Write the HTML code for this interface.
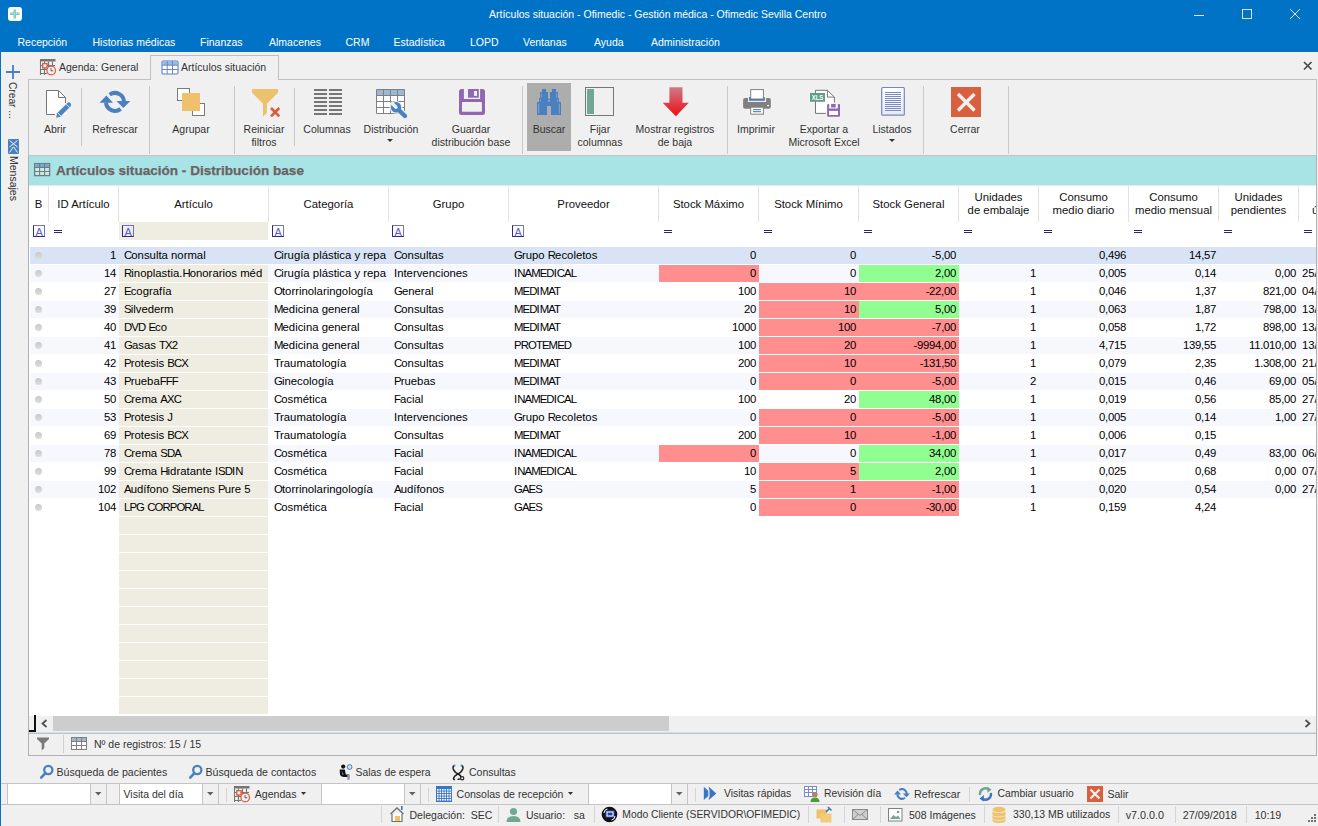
<!DOCTYPE html>
<html><head><meta charset="utf-8">
<style>
*{margin:0;padding:0;box-sizing:border-box}
html,body{width:1318px;height:826px;overflow:hidden;background:#f0f0f0;font-family:"Liberation Sans",sans-serif;color:#222}
.a{position:absolute}
.ui{font-size:10.5px;white-space:nowrap;line-height:12px}
.w{color:#fff}
#title{left:0;top:0;width:1318px;height:52px;background:#0173c6}
.menu{top:36px;color:#fff;font-size:10.5px;line-height:12px;white-space:nowrap}
.sep{width:1px;background:#c8c8c8}
.rl{font-size:10.5px;line-height:13px;text-align:center;white-space:nowrap;color:#333}
.g{font-size:11.35px;line-height:13px;white-space:nowrap;color:#000}
.hd{font-size:11.35px;line-height:13px;white-space:nowrap;text-align:center;color:#111}
.vs{width:1px;background:#e2e2e2;top:186px;height:36px}
.fA{width:12px;height:12px;border:1px solid #7272c4;border-left-color:#2e2e88;border-bottom-color:#2e2e88;top:225px}
.fA:after{content:"A";position:absolute;left:1.5px;top:-0.5px;font-size:11px;color:#5a5ad2;font-family:"Liberation Sans",sans-serif}
.eq{top:230px;width:8px;height:3px;border-top:1px solid #2a2a6a;border-bottom:1px solid #2a2a6a}
.bul{width:7px;height:7px;border-radius:50%;background:linear-gradient(#c8c8c8,#dedede)}
</style></head><body>
<!-- title bar -->
<div id="title" class="a"></div>
<div class="a" style="left:0;top:52px;width:1px;height:774px;background:#0173c6"></div>
<svg class="a" style="left:8px;top:7px" width="14" height="14" viewBox="0 0 14 14"><rect width="14" height="14" rx="3" fill="#fff"/><path d="M5.5 2.5H8V5.5H11.5V8H8V11.5H5.5V8H2V5.5H5.5Z" fill="#7cc8c0"/><path d="M6.7 2.5V11.5M2 6.7H11.5" stroke="#fff" stroke-width="0.5" stroke-dasharray="1 1"/></svg>
<div class="a w ui" style="left:489px;top:8px">Artículos situación - Ofimedic - Gestión médica - Ofimedic Sevilla Centro</div>
<div class="a" style="left:1194px;top:15px;width:10px;height:1px;background:#e6e0d8"></div>
<div class="a" style="left:1242px;top:9px;width:10px;height:10px;border:1px solid #e6e0d8"></div>
<svg class="a" style="left:1289px;top:8px" width="12" height="12"><path d="M1 1L11 11M11 1L1 11" stroke="#e6e0d8" stroke-width="1"/></svg>
<div class="a menu" style="left:17.5px">Recepción</div>
<div class="a menu" style="left:92.5px">Historias médicas</div>
<div class="a menu" style="left:200px">Finanzas</div>
<div class="a menu" style="left:269px">Almacenes</div>
<div class="a menu" style="left:345.5px">CRM</div>
<div class="a menu" style="left:393.5px">Estadística</div>
<div class="a menu" style="left:470px">LOPD</div>
<div class="a menu" style="left:523px">Ventanas</div>
<div class="a menu" style="left:594px">Ayuda</div>
<div class="a menu" style="left:651px">Administración</div>

<!-- tabs -->
<div class="a ui" style="left:59px;top:61px;color:#333">Agenda: General</div>
<div class="a" style="left:150px;top:55px;width:129px;height:25px;border:1px solid #c0c0c0;border-bottom:none;background:#f0f0f0"></div>
<div class="a ui" style="left:181px;top:61px;color:#333">Artículos situación</div>
<svg class="a" style="left:1302px;top:60px" width="11" height="11"><path d="M2 2L9.5 9.5M9.5 2L2 9.5" stroke="#4a4a4a" stroke-width="1.7"/></svg>

<!-- ribbon box -->
<div class="a" style="left:28px;top:79px;width:122px;height:1px;background:#c0c0c0"></div>
<div class="a" style="left:279px;top:79px;width:1038px;height:1px;background:#c0c0c0"></div>
<div class="a" style="left:28px;top:79px;width:1px;height:77px;background:#c0c0c0"></div>
<div class="a" style="left:1316px;top:79px;width:1px;height:77px;background:#c0c0c0"></div>

<!-- separators -->
<div class="a sep" style="left:81px;top:88px;height:58px"></div>
<div class="a sep" style="left:149px;top:86px;height:68px"></div>
<div class="a sep" style="left:234px;top:86px;height:68px"></div>
<div class="a sep" style="left:294px;top:88px;height:58px"></div>
<div class="a sep" style="left:522px;top:86px;height:68px"></div>
<div class="a sep" style="left:727px;top:86px;height:68px"></div>
<div class="a sep" style="left:923px;top:86px;height:68px"></div>
<div class="a sep" style="left:1008px;top:86px;height:68px"></div>
<!-- Buscar highlight -->
<div class="a" style="left:527px;top:83px;width:44px;height:68px;background:#adadad"></div>
<!-- labels -->
<div class="a rl" style="left:15px;width:80px;top:123px">Abrir</div>
<div class="a rl" style="left:75px;width:80px;top:123px">Refrescar</div>
<div class="a rl" style="left:151px;width:80px;top:123px">Agrupar</div>
<div class="a rl" style="left:224px;width:80px;top:123px">Reiniciar<br>filtros</div>
<div class="a rl" style="left:287px;width:80px;top:123px">Columnas</div>
<div class="a rl" style="left:351px;width:80px;top:123px">Distribución</div>
<svg class="a" style="left:387px;top:139px" width="7" height="4"><path d="M0 0H6L3 3Z" fill="#333"/></svg>
<div class="a rl" style="left:421px;width:100px;top:123px">Guardar<br>distribución base</div>
<div class="a rl" style="left:509px;width:80px;top:123px">Buscar</div>
<div class="a rl" style="left:560px;width:80px;top:123px">Fijar<br>columnas</div>
<div class="a rl" style="left:625px;width:100px;top:123px">Mostrar registros<br>de baja</div>
<div class="a rl" style="left:716px;width:80px;top:123px">Imprimir</div>
<div class="a rl" style="left:774px;width:100px;top:123px">Exportar a<br>Microsoft Excel</div>
<div class="a rl" style="left:852px;width:80px;top:123px">Listados</div>
<svg class="a" style="left:889px;top:139px" width="7" height="4"><path d="M0 0H6L3 3Z" fill="#333"/></svg>
<div class="a rl" style="left:925px;width:80px;top:123px">Cerrar</div>

<!-- Abrir icon -->
<svg class="a" style="left:44px;top:88px" width="30" height="32" viewBox="44 88 30 32">
<path d="M46.5 90.5H58.5L65.5 97.5V114.5H46.5Z" fill="#fff"/>
<path d="M55 114.5H46.5V90.5H58.5L65.5 97.5V103" fill="none" stroke="#767676" stroke-width="1"/>
<path d="M58.5 90.5V97.5H65.5" fill="none" stroke="#767676" stroke-width="1"/>
<path d="M56.2 117.8L57 113.3L67.4 102.9Q68.8 101.6 70.4 103.2Q71.8 104.7 70.6 106.2L60.3 116.8Z" fill="#4f83bf"/>
<path d="M57.6 112.8L60.8 116" stroke="#fff" stroke-width="0.8"/>
<path d="M66.3 104.2L69.6 107.5" stroke="#fff" stroke-width="0.8"/>
</svg>
<!-- Refrescar icon -->
<svg class="a" style="left:96px;top:86px" width="40" height="32" viewBox="0 0 40 32">
<path d="M13.7 8.7A9 9 0 0 1 28 16" fill="none" stroke="#4a7fc0" stroke-width="4"/>
<path d="M20.5 15.1H34.3L27.4 22.1Z" fill="#4a7fc0"/>
<path d="M24.6 22.9A9 9 0 0 1 10 16.5" fill="none" stroke="#4a7fc0" stroke-width="4"/>
<path d="M3.5 16.7H17L10.4 9.5Z" fill="#4a7fc0"/>
</svg>
<!-- Agrupar icon -->
<svg class="a" style="left:176px;top:87px" width="32" height="32" viewBox="176 87 32 32">
<rect x="177.5" y="88.5" width="12" height="12" fill="#fff" stroke="#7a7a7a" stroke-width="1"/>
<rect x="192.5" y="103.5" width="12" height="12" fill="#fff" stroke="#7a7a7a" stroke-width="1"/>
<rect x="182" y="93" width="18" height="18" fill="#efc16d"/>
</svg>
<!-- Reiniciar filtros icon -->
<svg class="a" style="left:250px;top:87px" width="34" height="32" viewBox="250 87 34 32">
<path d="M252 89H278V92.7L267 103.8V112.8L263 116.7V103.8L252 92.7Z" fill="#ecc26e"/>
<path d="M271 108L279.3 116.3M279.3 108L271 116.3" stroke="#db5a3a" stroke-width="2.6"/>
</svg>
<!-- Columnas icon -->
<svg class="a" style="left:312px;top:87px" width="32" height="30" viewBox="312 87 32 30">
<path d="M314 90H327M329 90H342M314 94H327M329 94H342M314 98H327M329 98H342M314 102H327M329 102H342M314 106H327M329 106H342M314 110H327M329 110H342M314 114H327M329 114H342" stroke="#767676" stroke-width="2"/>
</svg>
<!-- Distribucion icon -->
<svg class="a" style="left:374px;top:87px" width="36" height="34" viewBox="374 87 36 34">
<rect x="377" y="90" width="27" height="23" fill="#fff"/><rect x="377" y="90" width="27" height="5" fill="#9cb8d8"/>
<path d="M376.5 89.5H404.5V113.5H376.5ZM383.5 89.5V113.5M390.5 89.5V113.5M397.5 89.5V113.5M376.5 95.5H404.5M376.5 101.5H404.5M376.5 107.5H404.5" fill="none" stroke="#808080" stroke-width="1"/>
<circle cx="396" cy="107.3" r="6.4" fill="#f0f0f0"/>
<path d="M398 109.3L405 116" stroke="#f0f0f0" stroke-width="6.6" stroke-linecap="round"/>
<circle cx="396" cy="107.3" r="5.2" fill="#4a80bf"/>
<path d="M398 109.3L405 116" stroke="#4a80bf" stroke-width="4.4" stroke-linecap="round"/>
<path d="M397.2 106.1L394.8 108.5L389.8 103.5L392.2 101.1Z" fill="#f0f0f0"/>
<circle cx="396" cy="107.3" r="1.6" fill="#f0f0f0"/>
</svg>
<!-- Guardar icon -->
<svg class="a" style="left:459px;top:89px" width="26" height="26" viewBox="0 0 26 26">
<rect x="0" y="0" width="26" height="26" rx="2.5" fill="#9067b0"/>
<rect x="4.9" y="0" width="16.2" height="10" fill="#f0f0f0"/>
<rect x="9" y="0" width="10.8" height="8.7" fill="#9067b0"/>
<rect x="15" y="2" width="3" height="4.9" fill="#f0f0f0"/>
<rect x="3" y="13.1" width="19.9" height="9.7" rx="0.8" fill="#f0f0f0"/>
</svg>
<!-- Buscar icon -->
<svg class="a" style="left:537px;top:89px" width="24" height="26" viewBox="0 0 24 26">
<path d="M5 0H9V3H11V9.8H13V3H15V0H19V3H21V9.2H22V12.9H24V26H14V17H10V26H0V12.9H2V9.2H3V3H5Z" fill="#4a80bf"/>
<path d="M11 11.2H13V12.6H11Z" fill="#9fb6d3"/>
<path d="M1.7 14.5V24.5M22.3 14.5V24.5M3.3 10.5V12.5M20.7 10.5V12.5M4.3 4.5V8.5M19.7 4.5V8.5" stroke="#9fb6d3" stroke-width="0.7"/>
</svg>
<!-- Fijar columnas icon -->
<svg class="a" style="left:584px;top:86px" width="31" height="31" viewBox="584 86 31 31">
<rect x="585.5" y="87.5" width="28" height="28" fill="none" stroke="#767676" stroke-width="1"/>
<rect x="587" y="89" width="7" height="25" fill="#72a893"/>
</svg>
<!-- Mostrar registros de baja icon -->
<svg class="a" style="left:662px;top:87px" width="27" height="30" viewBox="662 87 27 30">
<defs><linearGradient id="ra" x1="0" y1="0" x2="0" y2="1"><stop offset="0" stop-color="#cf7a88"/><stop offset="1" stop-color="#ee0d12"/></linearGradient></defs>
<path d="M669.4 87.2H682.5V102.7H688.8L675.9 116.3L662.7 102.7H669.4Z" fill="url(#ra)"/>
</svg>
<!-- Imprimir icon -->
<svg class="a" style="left:742px;top:88px" width="30" height="28" viewBox="742 88 30 28">
<path d="M745 97.9H748V101.9H766.1V97.9H769Q770.8 97.9 770.8 99.9V106.7Q770.8 108.7 769 108.7H745Q743.1 108.7 743.1 106.7V99.9Q743.1 97.9 745 97.9Z" fill="#808080"/>
<path d="M749.1 97H751V99H763V97H764.8V100.8H749.1Z" fill="#3a76bc"/>
<rect x="750.7" y="89.6" width="12.7" height="9.4" fill="#fff" stroke="#808080" stroke-width="1"/>
<rect x="750.7" y="107.2" width="12.7" height="7" fill="#fff" stroke="#808080" stroke-width="1"/>
<path d="M753 109.7H761M753 111.7H761" stroke="#3a76bc" stroke-width="1"/>
<rect x="767" y="105" width="2" height="1.2" fill="#fff"/>
</svg>
<!-- Exportar icon -->
<svg class="a" style="left:808px;top:89px" width="34" height="29" viewBox="808 89 34 29">
<path d="M815.5 90.3H827.4L834.4 97.1V113.4H815.5Z" fill="#fff"/>
<path d="M825.8 113.4H815.5V90.3H827.4L834.4 97.1V102.5M827.4 90.3V97.1H834.4" fill="none" stroke="#767676" stroke-width="1"/>
<rect x="810" y="93" width="15" height="8.8" fill="#5f9f88"/>
<text x="811.8" y="99.8" font-family="Liberation Sans" font-weight="bold" font-size="7" textLength="11.5" lengthAdjust="spacingAndGlyphs" fill="#fff">XLS</text>
<rect x="827.1" y="103.9" width="12.9" height="12.8" rx="1" fill="#9067b0"/>
<rect x="829.2" y="103.9" width="8.6" height="4.6" fill="#fff"/>
<rect x="831.1" y="103.9" width="4.6" height="3.6" fill="#9067b0"/>
<rect x="829" y="110.9" width="9" height="4.1" fill="#fff"/>
</svg>
<!-- Listados icon -->
<svg class="a" style="left:880px;top:86px" width="26" height="31" viewBox="880 86 26 31">
<defs><linearGradient id="lg" x1="0" y1="0" x2="0" y2="1"><stop offset="0" stop-color="#fff"/><stop offset="1" stop-color="#e4eaf6"/></linearGradient></defs>
<rect x="881.7" y="87.5" width="22.6" height="27.7" rx="1" fill="url(#lg)" stroke="#7886bb" stroke-width="1.2"/>
<path d="M885 92.5H901M885 94.5H901M885 96.5H901M885 98.5H901M885 100.5H901M885 102.5H901M885 104.5H901M885 106.5H901M885 108.5H901M885 110.5H901" stroke="#7c8cc2" stroke-width="1"/>
</svg>
<!-- Cerrar icon -->
<svg class="a" style="left:951px;top:87px" width="30" height="30" viewBox="0 0 30 30">
<rect width="30" height="30" fill="#d9603e"/>
<path d="M7 7L23.5 23.5M23.5 7L7 23.5" stroke="#f0f0f0" stroke-width="3.4"/>
</svg>


<!-- grid -->
<div class="a" style="left:28px;top:156px;width:1289px;height:600px;border:1px solid #b0b0b0;border-top:none;background:#fff"></div>
<div class="a" style="left:29px;top:156px;width:1287px;height:29px;background:#a8e3e6"></div>
<div class="a" style="left:29px;top:185px;width:1287px;height:1px;background:#e4e8f8"></div>
<div class="a" style="left:28px;top:155px;width:1289px;height:1px;background:#c4c4c4"></div>
<svg class="a" style="left:33px;top:162px" width="18" height="15" viewBox="33 162 18 15">
<rect x="34.6" y="163.6" width="15" height="12" fill="#c4eef0" stroke="#7a7a7a" stroke-width="1.3"/>
<rect x="35.2" y="164.2" width="13.8" height="3" fill="#6aaad8"/>
<path d="M39.6 163.6V175.6M44.6 163.6V175.6M34.6 167.5H49.6M34.6 171.5H49.6" stroke="#7a7a7a" stroke-width="1.1"/>
</svg>
<div class="a" style="left:56px;top:163px;font-size:13.57px;font-weight:bold;color:#6a6262;white-space:nowrap;line-height:16px;-webkit-text-stroke:0.25px #6a6262">Artículos situación - Distribución base</div>

<div class="a" style="left:0;top:0;width:1316px;height:716px;overflow:hidden">
<div class="a hd" style="left:29px;width:19px;top:198px">B</div>
<div class="a vs" style="left:48px"></div>
<div class="a hd" style="left:49px;width:69px;top:198px">ID Artículo</div>
<div class="a vs" style="left:118px"></div>
<div class="a hd" style="left:119px;width:149px;top:198px">Artículo</div>
<div class="a vs" style="left:268px"></div>
<div class="a hd" style="left:269px;width:119px;top:198px">Categoría</div>
<div class="a vs" style="left:388px"></div>
<div class="a hd" style="left:389px;width:119px;top:198px">Grupo</div>
<div class="a vs" style="left:508px"></div>
<div class="a hd" style="left:509px;width:149px;top:198px">Proveedor</div>
<div class="a vs" style="left:658px"></div>
<div class="a hd" style="left:659px;width:99px;top:198px">Stock Máximo</div>
<div class="a vs" style="left:758px"></div>
<div class="a hd" style="left:759px;width:99px;top:198px">Stock Mínimo</div>
<div class="a vs" style="left:858px"></div>
<div class="a hd" style="left:859px;width:99px;top:198px">Stock General</div>
<div class="a vs" style="left:958px"></div>
<div class="a hd" style="left:959px;width:79px;top:191px">Unidades<br>de embalaje</div>
<div class="a vs" style="left:1038px"></div>
<div class="a hd" style="left:1039px;width:89px;top:191px">Consumo<br>medio diario</div>
<div class="a vs" style="left:1128px"></div>
<div class="a hd" style="left:1129px;width:89px;top:191px">Consumo<br>medio mensual</div>
<div class="a vs" style="left:1218px"></div>
<div class="a hd" style="left:1219px;width:79px;top:191px">Unidades<br>pendientes</div>
<div class="a vs" style="left:1298px"></div>
<div class="a hd" style="left:1312px;top:204px;text-align:left">ú</div>
<div class="a" style="left:119px;top:222px;width:149px;height:18px;background:#efede2"></div>
<div class="a fA" style="left:33px"></div>
<div class="a eq" style="left:54px"></div>
<div class="a fA" style="left:122px"></div>
<div class="a fA" style="left:272px"></div>
<div class="a fA" style="left:392px"></div>
<div class="a fA" style="left:512px"></div>
<div class="a eq" style="left:664px"></div>
<div class="a eq" style="left:764px"></div>
<div class="a eq" style="left:864px"></div>
<div class="a eq" style="left:964px"></div>
<div class="a eq" style="left:1044px"></div>
<div class="a eq" style="left:1134px"></div>
<div class="a eq" style="left:1224px"></div>
<div class="a eq" style="left:1304px"></div>
<div class="a" style="left:30px;top:247px;width:1286px;height:17px;background:#d8e4f6"></div>
<div class="a bul" style="left:35px;top:252px"></div>
<div class="a g" style="right:1200px;top:249px;letter-spacing:-0.3px">1</div>
<div class="a g" style="left:124px;top:249px"><span style="letter-spacing:-0.9px">C</span>onsulta normal</div>
<div class="a g" style="left:274px;top:249px"><span style="letter-spacing:-0.9px">C</span>irugía plástica y repa</div>
<div class="a g" style="left:394px;top:249px"><span style="letter-spacing:-0.9px">C</span>onsultas</div>
<div class="a g" style="left:514px;top:249px"><span style="letter-spacing:-0.9px">G</span>rupo <span style="letter-spacing:-0.9px">R</span>ecoletos</div>
<div class="a g" style="right:560px;top:249px;letter-spacing:-0.3px">0</div>
<div class="a g" style="right:460px;top:249px;letter-spacing:-0.3px">0</div>
<div class="a g" style="right:360px;top:249px;letter-spacing:-0.3px">-5,00</div>
<div class="a g" style="right:190px;top:249px;letter-spacing:-0.3px">0,496</div>
<div class="a g" style="right:100px;top:249px;letter-spacing:-0.3px">14,57</div>
<div class="a" style="left:30px;top:265px;width:1286px;height:17px;background:#f6f8fd"></div>
<div class="a" style="left:119px;top:265px;width:149px;height:17px;background:#efede2"></div>
<div class="a bul" style="left:35px;top:270px"></div>
<div class="a g" style="right:1200px;top:267px;letter-spacing:-0.3px">14</div>
<div class="a g" style="left:124px;top:267px"><span style="letter-spacing:-0.9px">R</span>inoplastia.<span style="letter-spacing:-0.9px">H</span>onorarios méd</div>
<div class="a g" style="left:274px;top:267px"><span style="letter-spacing:-0.9px">C</span>irugía plástica y repa</div>
<div class="a g" style="left:394px;top:267px">Intervenciones</div>
<div class="a g" style="left:514px;top:267px">I<span style="letter-spacing:-0.9px">N</span><span style="letter-spacing:-0.9px">A</span><span style="letter-spacing:-0.9px">M</span><span style="letter-spacing:-0.9px">E</span><span style="letter-spacing:-0.9px">D</span>I<span style="letter-spacing:-0.9px">C</span><span style="letter-spacing:-0.9px">A</span><span style="letter-spacing:-0.9px">L</span></div>
<div class="a" style="left:659px;top:265px;width:100px;height:17px;background:#ff8f8f"></div>
<div class="a g" style="right:560px;top:267px;letter-spacing:-0.3px">0</div>
<div class="a g" style="right:460px;top:267px;letter-spacing:-0.3px">0</div>
<div class="a" style="left:859px;top:265px;width:100px;height:17px;background:#90fe90"></div>
<div class="a g" style="right:360px;top:267px;letter-spacing:-0.3px">2,00</div>
<div class="a g" style="right:280px;top:267px;letter-spacing:-0.3px">1</div>
<div class="a g" style="right:190px;top:267px;letter-spacing:-0.3px">0,005</div>
<div class="a g" style="right:100px;top:267px;letter-spacing:-0.3px">0,14</div>
<div class="a g" style="right:20px;top:267px;letter-spacing:-0.3px">0,00</div>
<div class="a g" style="left:1302px;top:267px">25/09</div>
<div class="a" style="left:119px;top:283px;width:149px;height:17px;background:#efede2"></div>
<div class="a bul" style="left:35px;top:288px"></div>
<div class="a g" style="right:1200px;top:285px;letter-spacing:-0.3px">27</div>
<div class="a g" style="left:124px;top:285px"><span style="letter-spacing:-0.9px">E</span>cografía</div>
<div class="a g" style="left:274px;top:285px"><span style="letter-spacing:-0.9px">O</span>torrinolaringología</div>
<div class="a g" style="left:394px;top:285px"><span style="letter-spacing:-0.9px">G</span>eneral</div>
<div class="a g" style="left:514px;top:285px"><span style="letter-spacing:-0.9px">M</span><span style="letter-spacing:-0.9px">E</span><span style="letter-spacing:-0.9px">D</span>I<span style="letter-spacing:-0.9px">M</span><span style="letter-spacing:-0.9px">A</span><span style="letter-spacing:-0.9px">T</span></div>
<div class="a g" style="right:560px;top:285px;letter-spacing:-0.3px">100</div>
<div class="a" style="left:759px;top:283px;width:100px;height:17px;background:#ff8f8f"></div>
<div class="a g" style="right:460px;top:285px;letter-spacing:-0.3px">10</div>
<div class="a" style="left:859px;top:283px;width:100px;height:17px;background:#ff8f8f"></div>
<div class="a g" style="right:360px;top:285px;letter-spacing:-0.3px">-22,00</div>
<div class="a g" style="right:280px;top:285px;letter-spacing:-0.3px">1</div>
<div class="a g" style="right:190px;top:285px;letter-spacing:-0.3px">0,046</div>
<div class="a g" style="right:100px;top:285px;letter-spacing:-0.3px">1,37</div>
<div class="a g" style="right:20px;top:285px;letter-spacing:-0.3px">821,00</div>
<div class="a g" style="left:1302px;top:285px">04/09</div>
<div class="a" style="left:30px;top:301px;width:1286px;height:17px;background:#f6f8fd"></div>
<div class="a" style="left:119px;top:301px;width:149px;height:17px;background:#efede2"></div>
<div class="a bul" style="left:35px;top:306px"></div>
<div class="a g" style="right:1200px;top:303px;letter-spacing:-0.3px">39</div>
<div class="a g" style="left:124px;top:303px"><span style="letter-spacing:-0.9px">S</span>ilvederm</div>
<div class="a g" style="left:274px;top:303px"><span style="letter-spacing:-0.9px">M</span>edicina general</div>
<div class="a g" style="left:394px;top:303px"><span style="letter-spacing:-0.9px">C</span>onsultas</div>
<div class="a g" style="left:514px;top:303px"><span style="letter-spacing:-0.9px">M</span><span style="letter-spacing:-0.9px">E</span><span style="letter-spacing:-0.9px">D</span>I<span style="letter-spacing:-0.9px">M</span><span style="letter-spacing:-0.9px">A</span><span style="letter-spacing:-0.9px">T</span></div>
<div class="a g" style="right:560px;top:303px;letter-spacing:-0.3px">20</div>
<div class="a" style="left:759px;top:301px;width:100px;height:17px;background:#ff8f8f"></div>
<div class="a g" style="right:460px;top:303px;letter-spacing:-0.3px">10</div>
<div class="a" style="left:859px;top:301px;width:100px;height:17px;background:#90fe90"></div>
<div class="a g" style="right:360px;top:303px;letter-spacing:-0.3px">5,00</div>
<div class="a g" style="right:280px;top:303px;letter-spacing:-0.3px">1</div>
<div class="a g" style="right:190px;top:303px;letter-spacing:-0.3px">0,063</div>
<div class="a g" style="right:100px;top:303px;letter-spacing:-0.3px">1,87</div>
<div class="a g" style="right:20px;top:303px;letter-spacing:-0.3px">798,00</div>
<div class="a g" style="left:1302px;top:303px">13/09</div>
<div class="a" style="left:119px;top:319px;width:149px;height:17px;background:#efede2"></div>
<div class="a bul" style="left:35px;top:324px"></div>
<div class="a g" style="right:1200px;top:321px;letter-spacing:-0.3px">40</div>
<div class="a g" style="left:124px;top:321px"><span style="letter-spacing:-0.9px">D</span><span style="letter-spacing:-0.9px">V</span><span style="letter-spacing:-0.9px">D</span> <span style="letter-spacing:-0.9px">E</span>co</div>
<div class="a g" style="left:274px;top:321px"><span style="letter-spacing:-0.9px">M</span>edicina general</div>
<div class="a g" style="left:394px;top:321px"><span style="letter-spacing:-0.9px">C</span>onsultas</div>
<div class="a g" style="left:514px;top:321px"><span style="letter-spacing:-0.9px">M</span><span style="letter-spacing:-0.9px">E</span><span style="letter-spacing:-0.9px">D</span>I<span style="letter-spacing:-0.9px">M</span><span style="letter-spacing:-0.9px">A</span><span style="letter-spacing:-0.9px">T</span></div>
<div class="a g" style="right:560px;top:321px;letter-spacing:-0.3px">1000</div>
<div class="a" style="left:759px;top:319px;width:100px;height:17px;background:#ff8f8f"></div>
<div class="a g" style="right:460px;top:321px;letter-spacing:-0.3px">100</div>
<div class="a" style="left:859px;top:319px;width:100px;height:17px;background:#ff8f8f"></div>
<div class="a g" style="right:360px;top:321px;letter-spacing:-0.3px">-7,00</div>
<div class="a g" style="right:280px;top:321px;letter-spacing:-0.3px">1</div>
<div class="a g" style="right:190px;top:321px;letter-spacing:-0.3px">0,058</div>
<div class="a g" style="right:100px;top:321px;letter-spacing:-0.3px">1,72</div>
<div class="a g" style="right:20px;top:321px;letter-spacing:-0.3px">898,00</div>
<div class="a g" style="left:1302px;top:321px">13/09</div>
<div class="a" style="left:30px;top:337px;width:1286px;height:17px;background:#f6f8fd"></div>
<div class="a" style="left:119px;top:337px;width:149px;height:17px;background:#efede2"></div>
<div class="a bul" style="left:35px;top:342px"></div>
<div class="a g" style="right:1200px;top:339px;letter-spacing:-0.3px">41</div>
<div class="a g" style="left:124px;top:339px"><span style="letter-spacing:-0.9px">G</span>asas <span style="letter-spacing:-0.9px">T</span><span style="letter-spacing:-0.9px">X</span>2</div>
<div class="a g" style="left:274px;top:339px"><span style="letter-spacing:-0.9px">M</span>edicina general</div>
<div class="a g" style="left:394px;top:339px"><span style="letter-spacing:-0.9px">C</span>onsultas</div>
<div class="a g" style="left:514px;top:339px"><span style="letter-spacing:-0.9px">P</span><span style="letter-spacing:-0.9px">R</span><span style="letter-spacing:-0.9px">O</span><span style="letter-spacing:-0.9px">T</span><span style="letter-spacing:-0.9px">E</span><span style="letter-spacing:-0.9px">M</span><span style="letter-spacing:-0.9px">E</span><span style="letter-spacing:-0.9px">D</span></div>
<div class="a g" style="right:560px;top:339px;letter-spacing:-0.3px">100</div>
<div class="a" style="left:759px;top:337px;width:100px;height:17px;background:#ff8f8f"></div>
<div class="a g" style="right:460px;top:339px;letter-spacing:-0.3px">20</div>
<div class="a" style="left:859px;top:337px;width:100px;height:17px;background:#ff8f8f"></div>
<div class="a g" style="right:360px;top:339px;letter-spacing:-0.3px">-9994,00</div>
<div class="a g" style="right:280px;top:339px;letter-spacing:-0.3px">1</div>
<div class="a g" style="right:190px;top:339px;letter-spacing:-0.3px">4,715</div>
<div class="a g" style="right:100px;top:339px;letter-spacing:-0.3px">139,55</div>
<div class="a g" style="right:20px;top:339px;letter-spacing:-0.3px">11.010,00</div>
<div class="a g" style="left:1302px;top:339px">13/09</div>
<div class="a" style="left:119px;top:355px;width:149px;height:17px;background:#efede2"></div>
<div class="a bul" style="left:35px;top:360px"></div>
<div class="a g" style="right:1200px;top:357px;letter-spacing:-0.3px">42</div>
<div class="a g" style="left:124px;top:357px"><span style="letter-spacing:-0.9px">P</span>rotesis <span style="letter-spacing:-0.9px">B</span><span style="letter-spacing:-0.9px">C</span><span style="letter-spacing:-0.9px">X</span></div>
<div class="a g" style="left:274px;top:357px"><span style="letter-spacing:-0.9px">T</span>raumatología</div>
<div class="a g" style="left:394px;top:357px"><span style="letter-spacing:-0.9px">C</span>onsultas</div>
<div class="a g" style="left:514px;top:357px"><span style="letter-spacing:-0.9px">M</span><span style="letter-spacing:-0.9px">E</span><span style="letter-spacing:-0.9px">D</span>I<span style="letter-spacing:-0.9px">M</span><span style="letter-spacing:-0.9px">A</span><span style="letter-spacing:-0.9px">T</span></div>
<div class="a g" style="right:560px;top:357px;letter-spacing:-0.3px">200</div>
<div class="a" style="left:759px;top:355px;width:100px;height:17px;background:#ff8f8f"></div>
<div class="a g" style="right:460px;top:357px;letter-spacing:-0.3px">10</div>
<div class="a" style="left:859px;top:355px;width:100px;height:17px;background:#ff8f8f"></div>
<div class="a g" style="right:360px;top:357px;letter-spacing:-0.3px">-131,50</div>
<div class="a g" style="right:280px;top:357px;letter-spacing:-0.3px">1</div>
<div class="a g" style="right:190px;top:357px;letter-spacing:-0.3px">0,079</div>
<div class="a g" style="right:100px;top:357px;letter-spacing:-0.3px">2,35</div>
<div class="a g" style="right:20px;top:357px;letter-spacing:-0.3px">1.308,00</div>
<div class="a g" style="left:1302px;top:357px">21/09</div>
<div class="a" style="left:30px;top:373px;width:1286px;height:17px;background:#f6f8fd"></div>
<div class="a" style="left:119px;top:373px;width:149px;height:17px;background:#efede2"></div>
<div class="a bul" style="left:35px;top:378px"></div>
<div class="a g" style="right:1200px;top:375px;letter-spacing:-0.3px">43</div>
<div class="a g" style="left:124px;top:375px"><span style="letter-spacing:-0.9px">P</span>rueba<span style="letter-spacing:-0.9px">F</span><span style="letter-spacing:-0.9px">F</span><span style="letter-spacing:-0.9px">F</span></div>
<div class="a g" style="left:274px;top:375px"><span style="letter-spacing:-0.9px">G</span>inecología</div>
<div class="a g" style="left:394px;top:375px"><span style="letter-spacing:-0.9px">P</span>ruebas</div>
<div class="a g" style="left:514px;top:375px"><span style="letter-spacing:-0.9px">M</span><span style="letter-spacing:-0.9px">E</span><span style="letter-spacing:-0.9px">D</span>I<span style="letter-spacing:-0.9px">M</span><span style="letter-spacing:-0.9px">A</span><span style="letter-spacing:-0.9px">T</span></div>
<div class="a g" style="right:560px;top:375px;letter-spacing:-0.3px">0</div>
<div class="a" style="left:759px;top:373px;width:100px;height:17px;background:#ff8f8f"></div>
<div class="a g" style="right:460px;top:375px;letter-spacing:-0.3px">0</div>
<div class="a" style="left:859px;top:373px;width:100px;height:17px;background:#ff8f8f"></div>
<div class="a g" style="right:360px;top:375px;letter-spacing:-0.3px">-5,00</div>
<div class="a g" style="right:280px;top:375px;letter-spacing:-0.3px">2</div>
<div class="a g" style="right:190px;top:375px;letter-spacing:-0.3px">0,015</div>
<div class="a g" style="right:100px;top:375px;letter-spacing:-0.3px">0,46</div>
<div class="a g" style="right:20px;top:375px;letter-spacing:-0.3px">69,00</div>
<div class="a g" style="left:1302px;top:375px">05/09</div>
<div class="a" style="left:119px;top:391px;width:149px;height:17px;background:#efede2"></div>
<div class="a bul" style="left:35px;top:396px"></div>
<div class="a g" style="right:1200px;top:393px;letter-spacing:-0.3px">50</div>
<div class="a g" style="left:124px;top:393px"><span style="letter-spacing:-0.9px">C</span>rema <span style="letter-spacing:-0.9px">A</span><span style="letter-spacing:-0.9px">X</span><span style="letter-spacing:-0.9px">C</span></div>
<div class="a g" style="left:274px;top:393px"><span style="letter-spacing:-0.9px">C</span>osmética</div>
<div class="a g" style="left:394px;top:393px"><span style="letter-spacing:-0.9px">F</span>acial</div>
<div class="a g" style="left:514px;top:393px">I<span style="letter-spacing:-0.9px">N</span><span style="letter-spacing:-0.9px">A</span><span style="letter-spacing:-0.9px">M</span><span style="letter-spacing:-0.9px">E</span><span style="letter-spacing:-0.9px">D</span>I<span style="letter-spacing:-0.9px">C</span><span style="letter-spacing:-0.9px">A</span><span style="letter-spacing:-0.9px">L</span></div>
<div class="a g" style="right:560px;top:393px;letter-spacing:-0.3px">100</div>
<div class="a g" style="right:460px;top:393px;letter-spacing:-0.3px">20</div>
<div class="a" style="left:859px;top:391px;width:100px;height:17px;background:#90fe90"></div>
<div class="a g" style="right:360px;top:393px;letter-spacing:-0.3px">48,00</div>
<div class="a g" style="right:280px;top:393px;letter-spacing:-0.3px">1</div>
<div class="a g" style="right:190px;top:393px;letter-spacing:-0.3px">0,019</div>
<div class="a g" style="right:100px;top:393px;letter-spacing:-0.3px">0,56</div>
<div class="a g" style="right:20px;top:393px;letter-spacing:-0.3px">85,00</div>
<div class="a g" style="left:1302px;top:393px">27/09</div>
<div class="a" style="left:30px;top:409px;width:1286px;height:17px;background:#f6f8fd"></div>
<div class="a" style="left:119px;top:409px;width:149px;height:17px;background:#efede2"></div>
<div class="a bul" style="left:35px;top:414px"></div>
<div class="a g" style="right:1200px;top:411px;letter-spacing:-0.3px">53</div>
<div class="a g" style="left:124px;top:411px"><span style="letter-spacing:-0.9px">P</span>rotesis J</div>
<div class="a g" style="left:274px;top:411px"><span style="letter-spacing:-0.9px">T</span>raumatología</div>
<div class="a g" style="left:394px;top:411px">Intervenciones</div>
<div class="a g" style="left:514px;top:411px"><span style="letter-spacing:-0.9px">G</span>rupo <span style="letter-spacing:-0.9px">R</span>ecoletos</div>
<div class="a g" style="right:560px;top:411px;letter-spacing:-0.3px">0</div>
<div class="a" style="left:759px;top:409px;width:100px;height:17px;background:#ff8f8f"></div>
<div class="a g" style="right:460px;top:411px;letter-spacing:-0.3px">0</div>
<div class="a" style="left:859px;top:409px;width:100px;height:17px;background:#ff8f8f"></div>
<div class="a g" style="right:360px;top:411px;letter-spacing:-0.3px">-5,00</div>
<div class="a g" style="right:280px;top:411px;letter-spacing:-0.3px">1</div>
<div class="a g" style="right:190px;top:411px;letter-spacing:-0.3px">0,005</div>
<div class="a g" style="right:100px;top:411px;letter-spacing:-0.3px">0,14</div>
<div class="a g" style="right:20px;top:411px;letter-spacing:-0.3px">1,00</div>
<div class="a g" style="left:1302px;top:411px">27/09</div>
<div class="a" style="left:119px;top:427px;width:149px;height:17px;background:#efede2"></div>
<div class="a bul" style="left:35px;top:432px"></div>
<div class="a g" style="right:1200px;top:429px;letter-spacing:-0.3px">69</div>
<div class="a g" style="left:124px;top:429px"><span style="letter-spacing:-0.9px">P</span>rotesis <span style="letter-spacing:-0.9px">B</span><span style="letter-spacing:-0.9px">C</span><span style="letter-spacing:-0.9px">X</span></div>
<div class="a g" style="left:274px;top:429px"><span style="letter-spacing:-0.9px">T</span>raumatología</div>
<div class="a g" style="left:394px;top:429px"><span style="letter-spacing:-0.9px">C</span>onsultas</div>
<div class="a g" style="left:514px;top:429px"><span style="letter-spacing:-0.9px">M</span><span style="letter-spacing:-0.9px">E</span><span style="letter-spacing:-0.9px">D</span>I<span style="letter-spacing:-0.9px">M</span><span style="letter-spacing:-0.9px">A</span><span style="letter-spacing:-0.9px">T</span></div>
<div class="a g" style="right:560px;top:429px;letter-spacing:-0.3px">200</div>
<div class="a" style="left:759px;top:427px;width:100px;height:17px;background:#ff8f8f"></div>
<div class="a g" style="right:460px;top:429px;letter-spacing:-0.3px">10</div>
<div class="a" style="left:859px;top:427px;width:100px;height:17px;background:#ff8f8f"></div>
<div class="a g" style="right:360px;top:429px;letter-spacing:-0.3px">-1,00</div>
<div class="a g" style="right:280px;top:429px;letter-spacing:-0.3px">1</div>
<div class="a g" style="right:190px;top:429px;letter-spacing:-0.3px">0,006</div>
<div class="a g" style="right:100px;top:429px;letter-spacing:-0.3px">0,15</div>
<div class="a" style="left:30px;top:445px;width:1286px;height:17px;background:#f6f8fd"></div>
<div class="a" style="left:119px;top:445px;width:149px;height:17px;background:#efede2"></div>
<div class="a bul" style="left:35px;top:450px"></div>
<div class="a g" style="right:1200px;top:447px;letter-spacing:-0.3px">78</div>
<div class="a g" style="left:124px;top:447px"><span style="letter-spacing:-0.9px">C</span>rema <span style="letter-spacing:-0.9px">S</span><span style="letter-spacing:-0.9px">D</span><span style="letter-spacing:-0.9px">A</span></div>
<div class="a g" style="left:274px;top:447px"><span style="letter-spacing:-0.9px">C</span>osmética</div>
<div class="a g" style="left:394px;top:447px"><span style="letter-spacing:-0.9px">F</span>acial</div>
<div class="a g" style="left:514px;top:447px">I<span style="letter-spacing:-0.9px">N</span><span style="letter-spacing:-0.9px">A</span><span style="letter-spacing:-0.9px">M</span><span style="letter-spacing:-0.9px">E</span><span style="letter-spacing:-0.9px">D</span>I<span style="letter-spacing:-0.9px">C</span><span style="letter-spacing:-0.9px">A</span><span style="letter-spacing:-0.9px">L</span></div>
<div class="a" style="left:659px;top:445px;width:100px;height:17px;background:#ff8f8f"></div>
<div class="a g" style="right:560px;top:447px;letter-spacing:-0.3px">0</div>
<div class="a g" style="right:460px;top:447px;letter-spacing:-0.3px">0</div>
<div class="a" style="left:859px;top:445px;width:100px;height:17px;background:#90fe90"></div>
<div class="a g" style="right:360px;top:447px;letter-spacing:-0.3px">34,00</div>
<div class="a g" style="right:280px;top:447px;letter-spacing:-0.3px">1</div>
<div class="a g" style="right:190px;top:447px;letter-spacing:-0.3px">0,017</div>
<div class="a g" style="right:100px;top:447px;letter-spacing:-0.3px">0,49</div>
<div class="a g" style="right:20px;top:447px;letter-spacing:-0.3px">83,00</div>
<div class="a g" style="left:1302px;top:447px">06/09</div>
<div class="a" style="left:119px;top:463px;width:149px;height:17px;background:#efede2"></div>
<div class="a bul" style="left:35px;top:468px"></div>
<div class="a g" style="right:1200px;top:465px;letter-spacing:-0.3px">99</div>
<div class="a g" style="left:124px;top:465px"><span style="letter-spacing:-0.9px">C</span>rema <span style="letter-spacing:-0.9px">H</span>idratante I<span style="letter-spacing:-0.9px">S</span><span style="letter-spacing:-0.9px">D</span>I<span style="letter-spacing:-0.9px">N</span></div>
<div class="a g" style="left:274px;top:465px"><span style="letter-spacing:-0.9px">C</span>osmética</div>
<div class="a g" style="left:394px;top:465px"><span style="letter-spacing:-0.9px">F</span>acial</div>
<div class="a g" style="left:514px;top:465px">I<span style="letter-spacing:-0.9px">N</span><span style="letter-spacing:-0.9px">A</span><span style="letter-spacing:-0.9px">M</span><span style="letter-spacing:-0.9px">E</span><span style="letter-spacing:-0.9px">D</span>I<span style="letter-spacing:-0.9px">C</span><span style="letter-spacing:-0.9px">A</span><span style="letter-spacing:-0.9px">L</span></div>
<div class="a g" style="right:560px;top:465px;letter-spacing:-0.3px">10</div>
<div class="a" style="left:759px;top:463px;width:100px;height:17px;background:#ff8f8f"></div>
<div class="a g" style="right:460px;top:465px;letter-spacing:-0.3px">5</div>
<div class="a" style="left:859px;top:463px;width:100px;height:17px;background:#90fe90"></div>
<div class="a g" style="right:360px;top:465px;letter-spacing:-0.3px">2,00</div>
<div class="a g" style="right:280px;top:465px;letter-spacing:-0.3px">1</div>
<div class="a g" style="right:190px;top:465px;letter-spacing:-0.3px">0,025</div>
<div class="a g" style="right:100px;top:465px;letter-spacing:-0.3px">0,68</div>
<div class="a g" style="right:20px;top:465px;letter-spacing:-0.3px">0,00</div>
<div class="a g" style="left:1302px;top:465px">07/09</div>
<div class="a" style="left:30px;top:481px;width:1286px;height:17px;background:#f6f8fd"></div>
<div class="a" style="left:119px;top:481px;width:149px;height:17px;background:#efede2"></div>
<div class="a bul" style="left:35px;top:486px"></div>
<div class="a g" style="right:1200px;top:483px;letter-spacing:-0.3px">102</div>
<div class="a g" style="left:124px;top:483px"><span style="letter-spacing:-0.9px">A</span>udífono <span style="letter-spacing:-0.9px">S</span>iemens <span style="letter-spacing:-0.9px">P</span>ure 5</div>
<div class="a g" style="left:274px;top:483px"><span style="letter-spacing:-0.9px">O</span>torrinolaringología</div>
<div class="a g" style="left:394px;top:483px"><span style="letter-spacing:-0.9px">A</span>udífonos</div>
<div class="a g" style="left:514px;top:483px"><span style="letter-spacing:-0.9px">G</span><span style="letter-spacing:-0.9px">A</span><span style="letter-spacing:-0.9px">E</span><span style="letter-spacing:-0.9px">S</span></div>
<div class="a g" style="right:560px;top:483px;letter-spacing:-0.3px">5</div>
<div class="a" style="left:759px;top:481px;width:100px;height:17px;background:#ff8f8f"></div>
<div class="a g" style="right:460px;top:483px;letter-spacing:-0.3px">1</div>
<div class="a" style="left:859px;top:481px;width:100px;height:17px;background:#ff8f8f"></div>
<div class="a g" style="right:360px;top:483px;letter-spacing:-0.3px">-1,00</div>
<div class="a g" style="right:280px;top:483px;letter-spacing:-0.3px">1</div>
<div class="a g" style="right:190px;top:483px;letter-spacing:-0.3px">0,020</div>
<div class="a g" style="right:100px;top:483px;letter-spacing:-0.3px">0,54</div>
<div class="a g" style="right:20px;top:483px;letter-spacing:-0.3px">0,00</div>
<div class="a g" style="left:1302px;top:483px">27/09</div>
<div class="a" style="left:119px;top:499px;width:149px;height:17px;background:#efede2"></div>
<div class="a bul" style="left:35px;top:504px"></div>
<div class="a g" style="right:1200px;top:501px;letter-spacing:-0.3px">104</div>
<div class="a g" style="left:124px;top:501px"><span style="letter-spacing:-0.9px">L</span><span style="letter-spacing:-0.9px">P</span><span style="letter-spacing:-0.9px">G</span> <span style="letter-spacing:-0.9px">C</span><span style="letter-spacing:-0.9px">O</span><span style="letter-spacing:-0.9px">R</span><span style="letter-spacing:-0.9px">P</span><span style="letter-spacing:-0.9px">O</span><span style="letter-spacing:-0.9px">R</span><span style="letter-spacing:-0.9px">A</span><span style="letter-spacing:-0.9px">L</span></div>
<div class="a g" style="left:274px;top:501px"><span style="letter-spacing:-0.9px">C</span>osmética</div>
<div class="a g" style="left:394px;top:501px"><span style="letter-spacing:-0.9px">F</span>acial</div>
<div class="a g" style="left:514px;top:501px"><span style="letter-spacing:-0.9px">G</span><span style="letter-spacing:-0.9px">A</span><span style="letter-spacing:-0.9px">E</span><span style="letter-spacing:-0.9px">S</span></div>
<div class="a g" style="right:560px;top:501px;letter-spacing:-0.3px">0</div>
<div class="a" style="left:759px;top:499px;width:100px;height:17px;background:#ff8f8f"></div>
<div class="a g" style="right:460px;top:501px;letter-spacing:-0.3px">0</div>
<div class="a" style="left:859px;top:499px;width:100px;height:17px;background:#ff8f8f"></div>
<div class="a g" style="right:360px;top:501px;letter-spacing:-0.3px">-30,00</div>
<div class="a g" style="right:280px;top:501px;letter-spacing:-0.3px">1</div>
<div class="a g" style="right:190px;top:501px;letter-spacing:-0.3px">0,159</div>
<div class="a g" style="right:100px;top:501px;letter-spacing:-0.3px">4,24</div>
<div class="a" style="left:119px;top:517px;width:149px;height:17px;background:#efede2"></div>
<div class="a" style="left:119px;top:535px;width:149px;height:17px;background:#efede2"></div>
<div class="a" style="left:119px;top:553px;width:149px;height:17px;background:#efede2"></div>
<div class="a" style="left:119px;top:571px;width:149px;height:17px;background:#efede2"></div>
<div class="a" style="left:119px;top:589px;width:149px;height:17px;background:#efede2"></div>
<div class="a" style="left:119px;top:607px;width:149px;height:17px;background:#efede2"></div>
<div class="a" style="left:119px;top:625px;width:149px;height:17px;background:#efede2"></div>
<div class="a" style="left:119px;top:643px;width:149px;height:17px;background:#efede2"></div>
<div class="a" style="left:119px;top:661px;width:149px;height:17px;background:#efede2"></div>
<div class="a" style="left:119px;top:679px;width:149px;height:17px;background:#efede2"></div>
<div class="a" style="left:119px;top:697px;width:149px;height:17px;background:#efede2"></div>
</div>

<!-- footer panel -->
<div class="a" style="left:29px;top:732px;width:1287px;height:1px;background:#d2def0"></div>
<div class="a" style="left:29px;top:733px;width:1287px;height:22px;background:#f0f0f0;border-top:1px solid #c0c0c0"></div>
<div class="a ui" style="left:94px;top:738px;color:#333">Nº de registros: 15 / 15</div>

<!-- bottom bars -->
<!-- scrollbar -->
<div class="a" style="left:29px;top:716px;width:1287px;height:16px;background:#f0f0f0"></div>
<div class="a" style="left:53px;top:716px;width:616px;height:15px;background:#cdcdcd"></div>
<svg class="a" style="left:28px;top:714px" width="30" height="20" viewBox="28 714 30 20">
<path d="M35 715V731H29" fill="none" stroke="#111" stroke-width="2"/>
<path d="M46.5 720L42.5 723.5L46.5 727" fill="none" stroke="#505050" stroke-width="1.8"/>
</svg>
<svg class="a" style="left:1298px;top:716px" width="18" height="16" viewBox="1298 716 18 16">
<path d="M1305.5 720L1309.5 723.5L1305.5 727" fill="none" stroke="#505050" stroke-width="1.8"/>
</svg>
<!-- footer icons -->
<svg class="a" style="left:36px;top:736px" width="14" height="15" viewBox="36 736 14 15">
<path d="M37 737.5H49V739L44.3 743.5V748L41.7 750.5V743.5L37 739Z" fill="#7a7a7a"/>
</svg>
<div class="a sep" style="left:63px;top:735px;height:18px;background:#d0d0d0"></div>
<svg class="a" style="left:70px;top:736px" width="18" height="15" viewBox="70 736 18 15">
<rect x="71.5" y="737.5" width="15" height="12" fill="#fff" stroke="#808080" stroke-width="1"/>
<rect x="72" y="738" width="14" height="3.5" fill="#9cb8d8"/>
<path d="M76.5 737.5V749.5M81.5 737.5V749.5M71.5 741.5H86.5M71.5 745.5H86.5" stroke="#808080" stroke-width="1"/>
</svg>

<!-- quick links -->
<svg class="a" style="left:39px;top:764px" width="16" height="16" viewBox="39 764 16 16">
<circle cx="48.3" cy="770" r="4.1" fill="none" stroke="#4a80bf" stroke-width="2.3"/>
<path d="M45.2 773.3L41.2 777.6" stroke="#4a80bf" stroke-width="2.6" stroke-linecap="round"/>
</svg>
<div class="a ui" style="left:56.5px;top:766px;font-size:10.6px;color:#333">Búsqueda de pacientes</div>
<svg class="a" style="left:188px;top:764px" width="16" height="16" viewBox="39 764 16 16">
<circle cx="48.3" cy="770" r="4.1" fill="none" stroke="#4a80bf" stroke-width="2.3"/>
<path d="M45.2 773.3L41.2 777.6" stroke="#4a80bf" stroke-width="2.6" stroke-linecap="round"/>
</svg>
<div class="a ui" style="left:205.5px;top:766px;font-size:10.6px;color:#333">Búsqueda de contactos</div>
<svg class="a" style="left:339px;top:764px" width="14" height="16" viewBox="0 0 14 16">
<circle cx="4.2" cy="2.6" r="2.1" fill="#111"/>
<path d="M0.8 5.5H5.8L6.8 10.5H10.2V13H5.5Q0.8 13 0.8 9Z" fill="#111"/>
<path d="M2.6 6.5L4.8 10.8H3.2Z" fill="#3b9ac2"/>
<rect x="8.3" y="11" width="2.4" height="4.8" fill="#8a9ab0"/>
<circle cx="10.6" cy="3" r="2.4" fill="#cfe0f0" stroke="#4a80bf" stroke-width="1"/>
</svg>
<div class="a ui" style="left:355.5px;top:767px;font-size:10.4px;color:#333">Salas de espera</div>
<svg class="a" style="left:451px;top:764px" width="15" height="17" viewBox="0 0 15 17">
<path d="M3.5 1.5Q1.5 2 2.2 5Q3.5 8.5 8 10.5Q10.5 12 9.8 14Q9 15.8 6.5 15.2" fill="none" stroke="#222" stroke-width="1.5"/>
<path d="M10.5 1.5Q12.5 2 11.8 5Q10.5 8.5 6 10.5Q3 12 2.5 14.5Q2.5 15.8 4 15.5" fill="none" stroke="#222" stroke-width="1.5"/>
<circle cx="11.2" cy="14.2" r="1.6" fill="#fff" stroke="#222" stroke-width="1.2"/>
<circle cx="3.5" cy="1.6" r="1" fill="#3b9ac2"/><circle cx="10.5" cy="1.6" r="1" fill="#3b9ac2"/>
</svg>
<div class="a ui" style="left:469px;top:766px;font-size:10.5px;color:#333">Consultas</div>

<!-- toolbar -->
<div class="a" style="left:1px;top:783px;width:1317px;height:1px;background:#c4c4c4"></div>
<div class="a" style="left:1px;top:804px;width:1317px;height:1px;background:#c4c4c4"></div>
<!-- combos -->
<div class="a" style="left:7px;top:783px;width:84px;height:22px;background:#fff;border:1px solid #c4c4c4"></div>
<div class="a" style="left:90px;top:783px;width:17px;height:22px;border:1px solid #c4c4c4;border-left:1px solid #c4c4c4"></div>
<svg class="a" style="left:95px;top:792px" width="7" height="4"><path d="M0 0H6.5L3.25 3.5Z" fill="#606060"/></svg>
<div class="a" style="left:119px;top:783px;width:84px;height:22px;background:#fff;border:1px solid #c4c4c4"></div>
<div class="a" style="left:202px;top:783px;width:17px;height:22px;border:1px solid #c4c4c4"></div>
<svg class="a" style="left:207px;top:792px" width="7" height="4"><path d="M0 0H6.5L3.25 3.5Z" fill="#606060"/></svg>
<div class="a ui" style="left:123.5px;top:788px;font-size:10.5px;color:#333">Visita del día</div>
<div class="a sep" style="left:226px;top:788px;height:14px;background:#d4d4d4"></div>
<svg class="a" style="left:233px;top:785px" width="19" height="19" viewBox="39 58 19 19">
<rect x="40" y="59" width="15.5" height="2.5" fill="#767676"/>
<path d="M40.5 59V75M44.5 61.5V75M48.5 61.5V67M52.5 61.5V66M40.5 65.5H55M40.5 69.5H47M40.5 73.5H47" fill="none" stroke="#767676" stroke-width="1.1"/>
<rect x="42.8" y="63.7" width="4.2" height="4.2" fill="#fff" stroke="#d9573a" stroke-width="1.3"/>
<circle cx="51.2" cy="70.5" r="4.3" fill="#f0f0f0" stroke="#de5a3c" stroke-width="1.2"/>
<path d="M51 68V70.8H53.3" fill="none" stroke="#555" stroke-width="0.9"/>
</svg>
<div class="a ui" style="left:254.7px;top:788px;font-size:10.6px;color:#333">Agendas</div>
<svg class="a" style="left:301px;top:792px" width="6" height="4"><path d="M0 0H5L2.5 3Z" fill="#333"/></svg>
<div class="a" style="left:321px;top:783px;width:84px;height:22px;background:#fff;border:1px solid #c4c4c4"></div>
<div class="a" style="left:404px;top:783px;width:17px;height:22px;border:1px solid #c4c4c4"></div>
<svg class="a" style="left:409px;top:792px" width="7" height="4"><path d="M0 0H6.5L3.25 3.5Z" fill="#606060"/></svg>
<div class="a sep" style="left:428px;top:788px;height:14px;background:#d4d4d4"></div>
<svg class="a" style="left:436px;top:786px" width="16" height="16" viewBox="0 0 16 16">
<rect x="0" y="0" width="16" height="16" fill="#3b74c2"/>
<g fill="#fff">
<rect x="1.0" y="3.0" width="1.6" height="1.6"/>
<rect x="1.0" y="5.5" width="1.6" height="1.6"/>
<rect x="1.0" y="8.0" width="1.6" height="1.6"/>
<rect x="1.0" y="10.5" width="1.6" height="1.6"/>
<rect x="1.0" y="13.0" width="1.6" height="1.6"/>
<rect x="3.5" y="3.0" width="1.6" height="1.6"/>
<rect x="3.5" y="5.5" width="1.6" height="1.6"/>
<rect x="3.5" y="8.0" width="1.6" height="1.6"/>
<rect x="3.5" y="10.5" width="1.6" height="1.6"/>
<rect x="3.5" y="13.0" width="1.6" height="1.6"/>
<rect x="6.0" y="3.0" width="1.6" height="1.6"/>
<rect x="6.0" y="5.5" width="1.6" height="1.6"/>
<rect x="6.0" y="8.0" width="1.6" height="1.6"/>
<rect x="6.0" y="10.5" width="1.6" height="1.6"/>
<rect x="6.0" y="13.0" width="1.6" height="1.6"/>
<rect x="8.5" y="3.0" width="1.6" height="1.6"/>
<rect x="8.5" y="5.5" width="1.6" height="1.6"/>
<rect x="8.5" y="8.0" width="1.6" height="1.6"/>
<rect x="8.5" y="10.5" width="1.6" height="1.6"/>
<rect x="8.5" y="13.0" width="1.6" height="1.6"/>
<rect x="11.0" y="3.0" width="1.6" height="1.6"/>
<rect x="11.0" y="5.5" width="1.6" height="1.6"/>
<rect x="11.0" y="8.0" width="1.6" height="1.6"/>
<rect x="11.0" y="10.5" width="1.6" height="1.6"/>
<rect x="11.0" y="13.0" width="1.6" height="1.6"/>
<rect x="13.5" y="3.0" width="1.6" height="1.6"/>
<rect x="13.5" y="5.5" width="1.6" height="1.6"/>
<rect x="13.5" y="8.0" width="1.6" height="1.6"/>
<rect x="13.5" y="10.5" width="1.6" height="1.6"/>
<rect x="13.5" y="13.0" width="1.6" height="1.6"/>
</g></svg>
<div class="a ui" style="left:456.6px;top:788px;font-size:10.5px;color:#333">Consolas de recepción</div>
<svg class="a" style="left:568px;top:792px" width="6" height="4"><path d="M0 0H5L2.5 3Z" fill="#333"/></svg>
<div class="a" style="left:588px;top:783px;width:84px;height:22px;background:#fff;border:1px solid #c4c4c4"></div>
<div class="a" style="left:671px;top:783px;width:17px;height:22px;border:1px solid #c4c4c4"></div>
<svg class="a" style="left:676px;top:792px" width="7" height="4"><path d="M0 0H6.5L3.25 3.5Z" fill="#606060"/></svg>
<div class="a sep" style="left:695px;top:788px;height:14px;background:#d4d4d4"></div>
<svg class="a" style="left:703px;top:786px" width="14" height="15" viewBox="703 786 14 15">
<path d="M703.8 786.8L711.2 793.4L703.8 800Z" fill="#3b74c2"/>
<path d="M708.8 786.8L716.3 793.4L708.8 800Z" fill="#3b74c2"/>
<path d="M708.3 788.5L709.5 789.6V797.2L708.3 798.3" fill="#f0f0f0"/>
</svg>
<div class="a ui" style="left:723.9px;top:788px;font-size:10.4px;color:#333">Visitas rápidas</div>
<svg class="a" style="left:804px;top:786px" width="17" height="17" viewBox="0 0 17 17">
<rect x="0.5" y="0.5" width="12" height="10" fill="#fff" stroke="#7a8cc8" stroke-width="1"/>
<path d="M0.5 3.5H12.5M0.5 6.5H12.5M4.5 0.5V10.5M8.5 0.5V10.5" stroke="#7a8cc8" stroke-width="1"/>
<circle cx="11" cy="8.5" r="2.6" fill="#b8845a"/>
<path d="M6.5 16Q6.5 11.5 11 11.5Q15.5 11.5 15.5 16Z" fill="#4c9a3c"/>
</svg>
<div class="a ui" style="left:824px;top:788px;font-size:10.4px;color:#333">Revisión día</div>
<svg class="a" style="left:894px;top:788px" width="16" height="12" viewBox="3.5 5 30.8 22" preserveAspectRatio="none">
<path d="M13.7 8.7A9 9 0 0 1 28 16" fill="none" stroke="#4a7fc0" stroke-width="4"/>
<path d="M20.5 15.1H34.3L27.4 22.1Z" fill="#4a7fc0"/>
<path d="M24.6 22.9A9 9 0 0 1 10 16.5" fill="none" stroke="#4a7fc0" stroke-width="4"/>
<path d="M3.5 16.7H17L10.4 9.5Z" fill="#4a7fc0"/>
</svg>
<div class="a ui" style="left:914px;top:788px;font-size:10.7px;color:#333">Refrescar</div>
<div class="a sep" style="left:969px;top:787px;height:15px;background:#d4d4d4"></div>
<svg class="a" style="left:978px;top:786px" width="15" height="16" viewBox="0 0 15 16">
<path d="M2.2 9A5.5 5.5 0 0 1 11 3.5" fill="none" stroke="#6aa890" stroke-width="2.4"/>
<path d="M9 0.5L13.5 3.5L9.5 7Z" fill="#6aa890"/>
<path d="M12.8 7A5.5 5.5 0 0 1 4 12.5" fill="none" stroke="#3b74c2" stroke-width="2.4"/>
<path d="M6 9L1.5 12.5L5.5 15.5Z" fill="#3b74c2"/>
</svg>
<div class="a ui" style="left:997.5px;top:788px;font-size:10.4px;color:#333">Cambiar usuario</div>
<svg class="a" style="left:1087px;top:786px" width="16" height="16" viewBox="0 0 16 16">
<rect width="16" height="16" fill="#d9603e"/>
<path d="M3.5 3.5L12.5 12.5M12.5 3.5L3.5 12.5" stroke="#f0f0f0" stroke-width="2.2"/>
</svg>
<div class="a ui" style="left:1107.5px;top:788px;font-size:10.5px;color:#333">Salir</div>

<!-- status bar -->
<div class="a sep" style="left:381px;top:806px;height:17px;background:#d4d4d4"></div>
<svg class="a" style="left:389px;top:805px" width="16" height="18" viewBox="0 0 16 18">
<path d="M1.5 9L8 3L14.5 9" fill="none" stroke="#707070" stroke-width="1.3"/>
<path d="M3 8.5V16.5H13V8.5" fill="#fff" stroke="#707070" stroke-width="1.2"/>
<rect x="6" y="11" width="5" height="5" fill="#efc16d"/>
<rect x="12" y="1" width="1.6" height="4" fill="#3b74c2"/>
</svg>
<div class="a ui" style="left:409.5px;top:809px;font-size:10.5px;color:#333">Delegación:&nbsp; SEC</div>
<div class="a sep" style="left:498px;top:806px;height:17px;background:#d4d4d4"></div>
<svg class="a" style="left:506px;top:807px" width="16" height="16" viewBox="0 0 16 16">
<circle cx="7.5" cy="4.5" r="3.6" fill="#72a893"/>
<path d="M0.5 15Q0.5 9 7.5 9Q14.5 9 14.5 15Z" fill="#72a893"/>
</svg>
<div class="a ui" style="left:526px;top:809px;font-size:10.5px;color:#333">Usuario:&nbsp;&nbsp; sa</div>
<div class="a sep" style="left:594px;top:806px;height:17px;background:#d4d4d4"></div>
<svg class="a" style="left:601px;top:806px" width="18" height="17" viewBox="0 0 18 17">
<circle cx="8.5" cy="8.5" r="7.8" fill="#111"/>
<rect x="5" y="5" width="8" height="6" fill="#fff" stroke="#3050c0" stroke-width="1"/>
<rect x="6.5" y="6.5" width="5" height="3" fill="#2040b0"/>
<path d="M3 7Q3 3.5 6.5 3M14 10Q14 13.5 10.5 14" fill="none" stroke="#fff" stroke-width="1"/>
</svg>
<div class="a ui" style="left:622.3px;top:809px;font-size:10.35px;color:#333">Modo Cliente (SERVIDOR\OFIMEDIC)</div>
<div class="a sep" style="left:808px;top:806px;height:17px;background:#d4d4d4"></div>
<svg class="a" style="left:816px;top:806px" width="17" height="17" viewBox="0 0 17 17">
<rect x="0.5" y="3.5" width="10.5" height="9" fill="#efc16d"/>
<rect x="4.5" y="7.5" width="11" height="9" fill="#f2cb78"/>
<path d="M10 6L14 2M12 1L15.5 4.5" stroke="#3b74c2" stroke-width="1.6"/>
</svg>
<div class="a sep" style="left:844px;top:806px;height:17px;background:#d4d4d4"></div>
<svg class="a" style="left:852px;top:809px" width="16" height="11" viewBox="0 0 16 11">
<rect x="0.5" y="0.5" width="15" height="10" fill="#d0d0d0" stroke="#8a8a8a" stroke-width="1"/>
<path d="M0.5 0.5L8 6.5L15.5 0.5M0.5 10.5L6 5.5M15.5 10.5L10 5.5" fill="none" stroke="#8a8a8a" stroke-width="1"/>
</svg>
<div class="a sep" style="left:880px;top:806px;height:17px;background:#d4d4d4"></div>
<svg class="a" style="left:888px;top:808px" width="15" height="14" viewBox="0 0 15 14">
<rect x="0.5" y="0.5" width="13.5" height="12.5" fill="#fff" stroke="#808080" stroke-width="1"/>
<path d="M2 11L5.5 7L8 9L10 7.5L12.5 11Z" fill="#72a893"/>
<circle cx="10" cy="4" r="1.3" fill="#72a893"/>
</svg>
<div class="a ui" style="left:909px;top:809px;font-size:10.55px;color:#333">508 Imágenes</div>
<div class="a sep" style="left:984px;top:806px;height:17px;background:#d4d4d4"></div>
<svg class="a" style="left:992px;top:806px" width="15" height="18" viewBox="0 0 15 18">
<ellipse cx="7" cy="3.5" rx="6.5" ry="2.8" fill="#efc16d"/>
<path d="M0.5 4.5V14.5Q0.5 17 7 17Q13.5 17 13.5 14.5V4.5Q13.5 7 7 7Q0.5 7 0.5 4.5Z" fill="#efc16d"/>
<path d="M0.5 8.5Q0.5 11 7 11Q13.5 11 13.5 8.5M0.5 12Q0.5 14.5 7 14.5Q13.5 14.5 13.5 12" fill="none" stroke="#f8e3b8" stroke-width="1"/>
</svg>
<div class="a ui" style="left:1013px;top:809px;font-size:10.47px;color:#333">330,13 MB utilizados</div>
<div class="a sep" style="left:1118px;top:806px;height:17px;background:#d4d4d4"></div>
<div class="a ui" style="left:1125.7px;top:809px;font-size:10.8px;color:#333">v7.0.0.0</div>
<div class="a sep" style="left:1175px;top:806px;height:17px;background:#d4d4d4"></div>
<div class="a ui" style="left:1182.7px;top:809px;font-size:10.8px;color:#333">27/09/2018</div>
<div class="a sep" style="left:1246px;top:806px;height:17px;background:#d4d4d4"></div>
<div class="a ui" style="left:1254.7px;top:809px;font-size:10.63px;color:#333">10:19</div>
<svg class="a" style="left:1305px;top:813px" width="12" height="12" viewBox="0 0 12 12">
<path d="M9 1h2v2h-2zM6 4h2v2h-2zM9 4h2v2h-2zM3 7h2v2h-2zM6 7h2v2h-2zM9 7h2v2h-2z" fill="#707070"/>
</svg>

<!-- tab icons -->
<svg class="a" style="left:36px;top:57px" width="22" height="20" viewBox="36 57 22 20">
<rect x="40" y="59" width="15.5" height="2.5" fill="#767676"/>
<path d="M40.5 59V75M44.5 61.5V75M48.5 61.5V67M52.5 61.5V66M40.5 65.5H55M40.5 69.5H47M40.5 73.5H47" fill="none" stroke="#767676" stroke-width="1.1"/>
<rect x="42.8" y="63.7" width="4.2" height="4.2" fill="#fff" stroke="#d9573a" stroke-width="1.3"/>
<circle cx="51.2" cy="70.5" r="4.3" fill="#f0f0f0" stroke="#de5a3c" stroke-width="1.2"/>
<path d="M51 68V70.8H53.3" fill="none" stroke="#555" stroke-width="0.9"/>
</svg>
<svg class="a" style="left:161px;top:60px" width="18" height="15" viewBox="0 0 18 15">
<rect x="1" y="1" width="16" height="13" rx="1.2" fill="#fff" stroke="#5b7fc5" stroke-width="1.1"/>
<rect x="1.5" y="1.5" width="15" height="3.5" fill="#90bce8"/>
<path d="M6.2 1V14M11.5 1V14M1 5.2H17M1 9.5H17" stroke="#6d86c6" stroke-width="1"/>
</svg>
<!-- sidebar -->
<svg class="a" style="left:5px;top:64px" width="16" height="16" viewBox="0 0 16 16">
<path d="M8 1V15M1 8H15" stroke="#4a7fc0" stroke-width="1.8"/>
</svg>
<div class="a ui" style="left:18px;top:82px;transform-origin:0 0;transform:rotate(90deg);font-size:10.2px;color:#333">Crear ...</div>
<svg class="a" style="left:8px;top:139px" width="11" height="15" viewBox="0 0 11 15">
<rect x="0" y="0" width="11" height="15" rx="1" fill="#4a80bf"/>
<path d="M1.5 1.5L9.5 8M9.5 1.5L1.5 8M1.5 13.5L5.5 7.8M9.5 13.5L5.5 7.8" fill="none" stroke="#fff" stroke-width="0.9"/>
</svg>
<div class="a ui" style="left:20px;top:156px;transform-origin:0 0;transform:rotate(90deg);font-size:10.5px;color:#333">Mensajes</div>

</body></html>
